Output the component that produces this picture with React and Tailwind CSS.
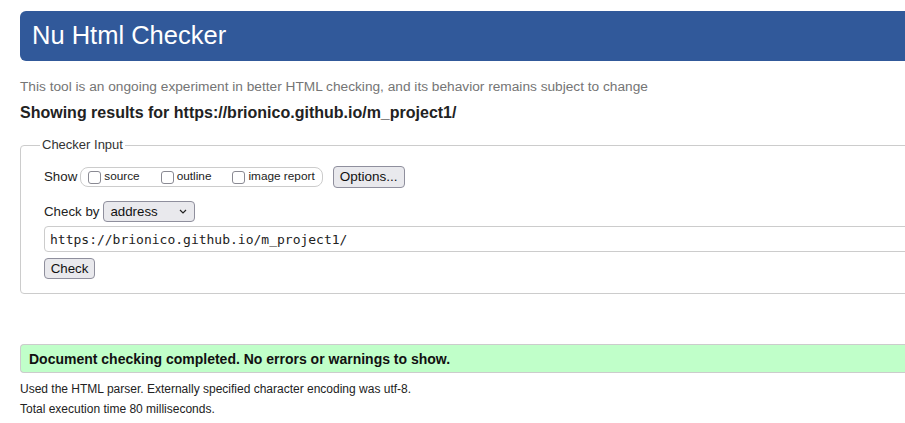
import React from 'react'

const sans = { fontFamily: '"Liberation Sans", Arial, sans-serif' }

const Box = ({ label }) => (
  <span className="flex items-center">
    <span className="w-[13px] h-[13px] border border-[#8a8a93] rounded-[3px] bg-white" />
    <span className="ml-[3px] text-[11.8px] leading-none text-[#222]">{label}</span>
  </span>
)

export default function App() {
  return (
    <div className="w-[905px] h-[423px] overflow-hidden bg-white text-[#222]" style={sans}>
      <div className="ml-5 w-[1000px] pt-[11px]">
        {/* Header */}
        <div className="h-[50px] rounded-l-[6px] bg-[#31599a] flex items-center pl-3">
          <h1 className="text-white text-[25.5px] leading-none">Nu Html Checker</h1>
        </div>

        <p className="mt-[18px] text-[13.7px] leading-4 text-[#757575]">
          This tool is an ongoing experiment in better HTML checking, and its behavior remains subject to change
        </p>
        <h2 className="mt-2 text-[16px] leading-5 font-bold text-[#222]">
          Showing results for https://brionico.github.io/m_project1/
        </h2>

        {/* Checker input */}
        <fieldset className="mt-[14px] border border-[#ccc] rounded-[4px] pl-[23px] pt-[13px] pb-[14px]">
          <legend className="-ml-[4px] px-[2px] text-[13px] leading-4 text-[#333]">Checker Input</legend>

          <div className="flex items-center h-[22px]">
            <span className="text-[13.3px]">Show</span>
            <div className="ml-[3px] h-[20px] border border-[#ccc] rounded-lg flex items-center pl-[7px] pr-[7px] gap-[21px]">
              <Box label="source" />
              <Box label="outline" />
              <Box label="image report" />
            </div>
            <button className="ml-[10px] h-[22px] w-[72px] bg-[#e9e9ed] border border-[#8f8f9d] rounded-[4px] text-[13.5px] leading-none text-[#111]">
              Options...
            </button>
          </div>

          <div className="mt-[13px] flex items-center">
            <span className="text-[13.3px]">Check by</span>
            <div className="ml-[4px] w-[92px] h-[21px] bg-[#e9e9ed] border border-[#8f8f9d] rounded-[4px] flex items-center justify-between pl-[6px] pr-[7px]">
              <span className="text-[13.3px] leading-none text-[#111]">address</span>
              <svg width="8" height="5" viewBox="0 0 8 5" fill="none">
                <path d="M1 1l3 3 3-3" stroke="#222" strokeWidth="1.2" />
              </svg>
            </div>
          </div>

          <div className="mt-[4px] h-[26px] border border-[#ccc] rounded-l-[4px] flex items-center pl-[5px]">
            <span className="text-[13px] leading-none text-[#222]" style={{ fontFamily: '"DejaVu Sans Mono", "Liberation Mono", monospace' }}>
              https://brionico.github.io/m_project1/
            </span>
          </div>

          <button className="mt-[6px] block w-[51px] h-[21px] bg-[#e9e9ed] border border-[#8f8f9d] rounded-[4px] text-[13.3px] leading-none text-[#111]">
            Check
          </button>
        </fieldset>

        {/* Result */}
        <div className="mt-[50px] h-[29px] bg-[#c0ffc9] border-y border-l border-[#ccc] rounded-l-[4px] flex items-center pl-2">
          <p className="text-[14px] font-bold leading-none text-[#111]">
            Document checking completed. No errors or warnings to show.
          </p>
        </div>
        <p className="mt-2 text-[12px] leading-4">
          Used the HTML parser. Externally specified character encoding was utf-8.
        </p>
        <p className="mt-1 text-[12px] leading-4">Total execution time 80 milliseconds.</p>
      </div>
    </div>
  )
}
